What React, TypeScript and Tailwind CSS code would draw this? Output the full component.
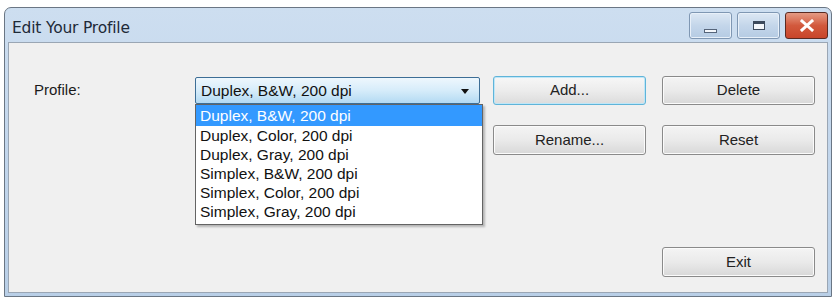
import React from "react";

/* --------------------------------------------------------------------------
   Data
   -------------------------------------------------------------------------- */

const profiles = [
  "Duplex, B&W, 200 dpi",
  "Duplex, Color, 200 dpi",
  "Duplex, Gray, 200 dpi",
  "Simplex, B&W, 200 dpi",
  "Simplex, Color, 200 dpi",
  "Simplex, Gray, 200 dpi",
];

/* --------------------------------------------------------------------------
   Sub-components
   -------------------------------------------------------------------------- */

/** Aero-style push button. */
function Button({
  children,
  focused = false,
  className = "",
}: {
  children: React.ReactNode;
  focused?: boolean;
  className?: string;
}) {
  return (
    <button
      className={
        "w-[153px] rounded-[3px] border text-[15px] text-[#222] flex items-center justify-center " +
        (focused
          ? "border-[#5fb4d9] shadow-[inset_0_0_0_1px_#bfe6f7] bg-gradient-to-b from-[#f7f7f7] via-[#ececec] to-[#dcdcdc] "
          : "border-[#8a8a8a] shadow-[inset_0_0_0_1px_#fbfbfb] bg-gradient-to-b from-[#f4f4f4] via-[#eaeaea] to-[#d8d8d8] ") +
        className
      }
    >
      {children}
    </button>
  );
}

/** Title bar caption button (min / max / close). */
function CaptionButton({ kind }: { kind: "min" | "max" | "close" }) {
  if (kind === "close") {
    return (
      <div className="w-[43px] h-[27px] rounded-[3px] border border-[#5a2a22] bg-gradient-to-b from-[#e49a84] via-[#d2593d] to-[#c8452a] flex items-center justify-center">
        <svg width="14" height="13" viewBox="0 0 14 13">
          <path d="M2 2 L12 11 M12 2 L2 11" stroke="#fff" strokeWidth="3" strokeLinecap="square" />
        </svg>
      </div>
    );
  }
  return (
    <div className="w-[43px] h-[27px] rounded-[3px] border border-[#7f97b3] bg-gradient-to-b from-[#dde8f4] via-[#c4d6ea] to-[#b5cbe3] shadow-[inset_0_0_0_1px_#e8f0f9] flex items-center justify-center">
      {kind === "min" ? (
        <div className="w-[13px] h-[4px] mt-[10px] bg-[#f4f7fb] border border-[#56657a]" />
      ) : (
        <div className="w-[12px] h-[9px] border border-[#3c4a5c] bg-[#f4f7fb] border-t-[3px]" />
      )}
    </div>
  );
}

/* --------------------------------------------------------------------------
   App
   -------------------------------------------------------------------------- */

export default function App() {
  return (
    <div className="w-[837px] h-[298px] bg-white pt-[7px] pl-[4px] pr-[5px] font-['Liberation_Sans',Arial,sans-serif]">
      {/* Window frame */}
      <div className="h-[290px] flex flex-col rounded-t-[7px] border border-[#6a7684] bg-gradient-to-b from-[#cddef0] via-[#c2d6ec] to-[#b9cfe7]">
        {/* ── Title bar ── */}
        <div className="h-[34px] flex items-center justify-between pl-[7px] pr-[3px]">
          <span className="text-[15.5px] text-[#1e2a38] font-['DejaVu_Sans',sans-serif] tracking-[-0.2px] mt-[8px]">
            Edit Your Profile
          </span>
          <div className="flex items-center gap-[5px] mt-[1px]">
            <CaptionButton kind="min" />
            <CaptionButton kind="max" />
            <CaptionButton kind="close" />
          </div>
        </div>

        {/* ── Client area ── */}
        <div className="relative flex-1 mx-[3px] mb-[3px] border border-[#9aa6b4] bg-[#f0f0f0] pt-[33px]">
          {/* Row 1 */}
          <div className="flex items-center">
            <span className="w-[186px] pl-[25px] text-[15px] text-[#1a1a1a]">Profile:</span>
            <div className="relative w-[285px] h-[27px] rounded-[2px] border border-[#3d6e96] bg-gradient-to-b from-[#eef7fd] via-[#d6ecfa] to-[#b3daf3] flex items-center pl-[5px] text-[15.5px] text-[#111]">
              Duplex, B&amp;W, 200 dpi
              <svg className="absolute right-[10px] top-[11px]" width="8" height="5" viewBox="0 0 8 5">
                <path d="M0 0 H8 L4 5 Z" fill="#111" />
              </svg>
            </div>
            <Button focused className="ml-[13px] h-[29px]">
              Add...
            </Button>
            <Button className="ml-[16px] h-[29px]">Delete</Button>
          </div>

          {/* Row 2 */}
          <div className="flex items-center mt-[20px] pl-[484px]">
            <Button className="h-[30px]">Rename...</Button>
            <Button className="ml-[16px] h-[30px]">Reset</Button>
          </div>

          {/* Row 3 */}
          <div className="flex mt-[92px] pl-[653px]">
            <Button className="h-[30px]">Exit</Button>
          </div>

          {/* ── Open dropdown list ── */}
          <div className="absolute left-[186px] top-[61px] w-[288px] h-[121px] bg-white border border-[#646464] shadow-[2px_2px_2px_rgba(0,0,0,0.25)] text-[15.5px] text-[#111]">
            {profiles.map((p, i) => (
              <div
                key={p}
                className={
                  i === 0
                    ? "h-[21px] flex items-center pl-[4px] bg-[#3399ff] text-white"
                    : "h-[19px] flex items-center pl-[4px]"
                }
              >
                {p}
              </div>
            ))}
          </div>
        </div>
      </div>
    </div>
  );
}
